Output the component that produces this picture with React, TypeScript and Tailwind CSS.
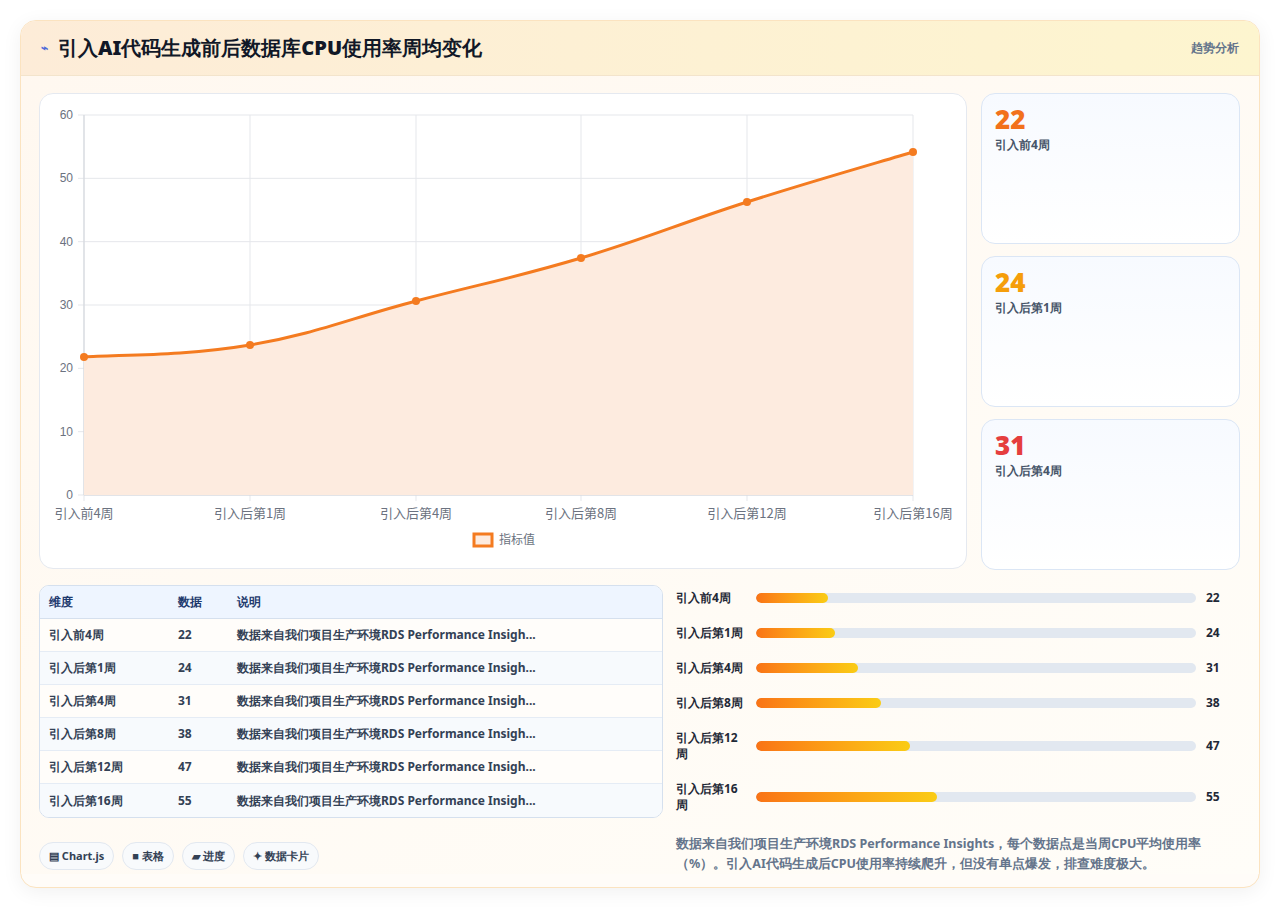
import React from "react";

const pts: [number, number][] = [
  [44, 264], [210, 252], [376, 208], [541, 165], [707, 109], [873, 59],
];

function curve(p: [number, number][]) {
  let d = `M${p[0][0]},${p[0][1]}`;
  const t = 0.2;
  for (let i = 0; i < p.length - 1; i++) {
    const p0 = p[i - 1] || p[i];
    const p1 = p[i];
    const p2 = p[i + 1];
    const p3 = p[i + 2] || p2;
    const c1 = [p1[0] + (p2[0] - p0[0]) * t, p1[1] + (p2[1] - p0[1]) * t];
    const c2 = [p2[0] - (p3[0] - p1[0]) * t, p2[1] - (p3[1] - p1[1]) * t];
    d += ` C${c1[0]},${c1[1]} ${c2[0]},${c2[1]} ${p2[0]},${p2[1]}`;
  }
  return d;
}

const labels = ["引入前4周", "引入后第1周", "引入后第4周", "引入后第8周", "引入后第12周", "引入后第16周"];
const vals = [22, 24, 31, 38, 47, 55];

function Chart() {
  const line = curve(pts);
  const area = `${line} L873,402 L44,402 Z`;
  const xs = pts.map((p) => p[0]);
  return (
    <svg width="926" height="474" viewBox="0 1 926 474" className="block">
      {[0, 10, 20, 30, 40, 50, 60].map((v) => {
        const y = 402 - (v / 60) * 380;
        return (
          <g key={v}>
            <line x1={38} x2={873} y1={y} y2={y} stroke="#e5e7eb" strokeWidth="1" />
            <text x={33} y={y + 4} textAnchor="end" fontSize="12" fill="#6b7280" fontFamily="Liberation Sans, sans-serif">{v}</text>
          </g>
        );
      })}
      {xs.map((x) => (
        <line key={x} x1={x} x2={x} y1={22} y2={408} stroke="#e5e7eb" strokeWidth="1" />
      ))}
      <line x1={44} x2={873} y1={402} y2={402} stroke="#d1d5db" />
      <line x1={44} x2={44} y1={22} y2={402} stroke="#d1d5db" />
      <path d={area} fill="#fdebdf" />
      <path d={line} fill="none" stroke="#f47b20" strokeWidth="3" />
      {pts.map((p, i) => (
        <circle key={i} cx={p[0]} cy={p[1]} r="4" fill="#f47b20" />
      ))}
      {labels.map((l, i) => (
        <text key={l} x={xs[i]} y={425} textAnchor="middle" fontSize="13" fill="#6b7280" fontFamily="Noto Sans CJK SC, sans-serif">{l}</text>
      ))}
      <rect x={434} y={441} width={18} height={12} fill="#fdebdf" stroke="#f47b20" strokeWidth="3" />
      <text x={459} y={451} fontSize="12" fill="#6b7280" fontFamily="Noto Sans CJK SC, sans-serif">指标值</text>
    </svg>
  );
}

const stats = [
  { v: "22", l: "引入前4周", c: "text-[#f2711c]" },
  { v: "24", l: "引入后第1周", c: "text-[#f59e0b]" },
  { v: "31", l: "引入后第4周", c: "text-[#e53e3e]" },
];

const desc = "数据来自我们项目生产环境RDS Performance Insigh...";

export default function App() {
  return (
    <div className="min-h-[909px] bg-white p-[20px] font-['Noto_Sans_CJK_SC',sans-serif]">
      <div className="rounded-[16px] border border-[#fbe3c0] bg-[#fffcf8] shadow-[0_4px_20px_rgba(0,0,0,0.06)] overflow-hidden h-[868px]">
        <div className="h-[55px] flex items-center justify-between px-[20px] bg-gradient-to-r from-[#fdecd8] to-[#fdf5cf] border-b border-[#f3e4cc]">
          <div className="flex items-center gap-[10px]">
            <span className="text-[#4f6bd8] text-[12px] font-bold">⌁</span>
            <span className="text-[20px] font-black text-[#111827]">引入AI代码生成前后数据库CPU使用率周均变化</span>
          </div>
          <span className="text-[12px] font-bold text-[#64748b]">趋势分析</span>
        </div>
        <div className="px-[18px] pt-[17px] bg-gradient-to-br from-[#fff8f0] to-[#fffdf8]">
          <div className="flex gap-[14px]">
            <div className="w-[928px] h-[476px] rounded-[14px] border border-[#e5e9f0] bg-white overflow-hidden">
              <Chart />
            </div>
            <div className="flex flex-col gap-[12px] w-[259px]">
              {stats.map((s) => (
                <div key={s.v} className="h-[151px] rounded-[14px] border border-[#dbe6f5] bg-gradient-to-b from-[#f7faff] to-white px-[13px] pt-[8px]">
                  <div className={`text-[26px] font-black leading-[34px] ${s.c}`}>{s.v}</div>
                  <div className="text-[12px] font-bold text-[#475569]">{s.l}</div>
                </div>
              ))}
            </div>
          </div>
          <div className="flex gap-[12px] mt-[15px]">
            <div className="w-[624px]">
              <div className="rounded-[10px] border border-[#d5e0ee] overflow-hidden bg-white">
                <div className="flex h-[33px] items-center bg-[#eef5ff] border-b border-[#d5e0ee] text-[12px] font-bold text-[#1e3a6e]">
                  <div className="w-[138px] pl-[9px]">维度</div>
                  <div className="w-[59px]">数据</div>
                  <div>说明</div>
                </div>
                {labels.map((l, i) => (
                  <div key={l} className={`flex h-[33px] items-center text-[12px] font-bold text-[#334155] ${i < 5 ? "border-b border-[#e5ecf5]" : ""} ${i % 2 ? "bg-[#f7fafd]" : "bg-[#fffdfa]"}`}>
                    <div className="w-[138px] pl-[9px]">{l}</div>
                    <div className="w-[59px]">{vals[i]}</div>
                    <div>{desc}</div>
                  </div>
                ))}
              </div>
              <div className="flex gap-[8px] mt-[24px]">
                {["▤ Chart.js", "■ 表格", "▰ 进度", "✦ 数据卡片"].map((c) => (
                  <span key={c} className="h-[28px] flex items-center px-[9px] rounded-full border border-[#e2e8f0] bg-[#f8fafc] text-[11px] font-bold text-[#334155]">{c}</span>
                ))}
              </div>
            </div>
            <div className="flex-1 pl-[1px]">
              <div className="flex flex-col">
                {labels.map((l, i) => {
                  const two = i >= 4;
                  return (
                    <div key={l} className={`flex items-center ${two ? "h-[51px]" : "h-[35px]"} ${i === 0 ? "-mt-[5px]" : ""}`}>
                      <div className="w-[80px] pr-[10px]">
                        <div className="w-[68px] text-[12px] font-bold text-[#1f2937] leading-[16px] break-all">{l}</div>
                      </div>
                      <div className="w-[440px] h-[10px] rounded-full bg-[#e2e8f0] overflow-hidden">
                        <div className="h-full rounded-full bg-gradient-to-r from-[#f97316] to-[#facc15]" style={{ width: `${(vals[i] / 134) * 100}%` }} />
                      </div>
                      <div className="ml-[10px] text-[12px] font-bold text-[#1f2937]">{vals[i]}</div>
                    </div>
                  );
                })}
              </div>
              <p className="mt-[12px] text-[12.5px] leading-[20px] font-bold text-[#64748b] w-[535px]">
                数据来自我们项目生产环境RDS Performance Insights，每个数据点是当周CPU平均使用率（%）。引入AI代码生成后CPU使用率持续爬升，但没有单点爆发，排查难度极大。
              </p>
            </div>
          </div>
        </div>
      </div>
    </div>
  );
}
